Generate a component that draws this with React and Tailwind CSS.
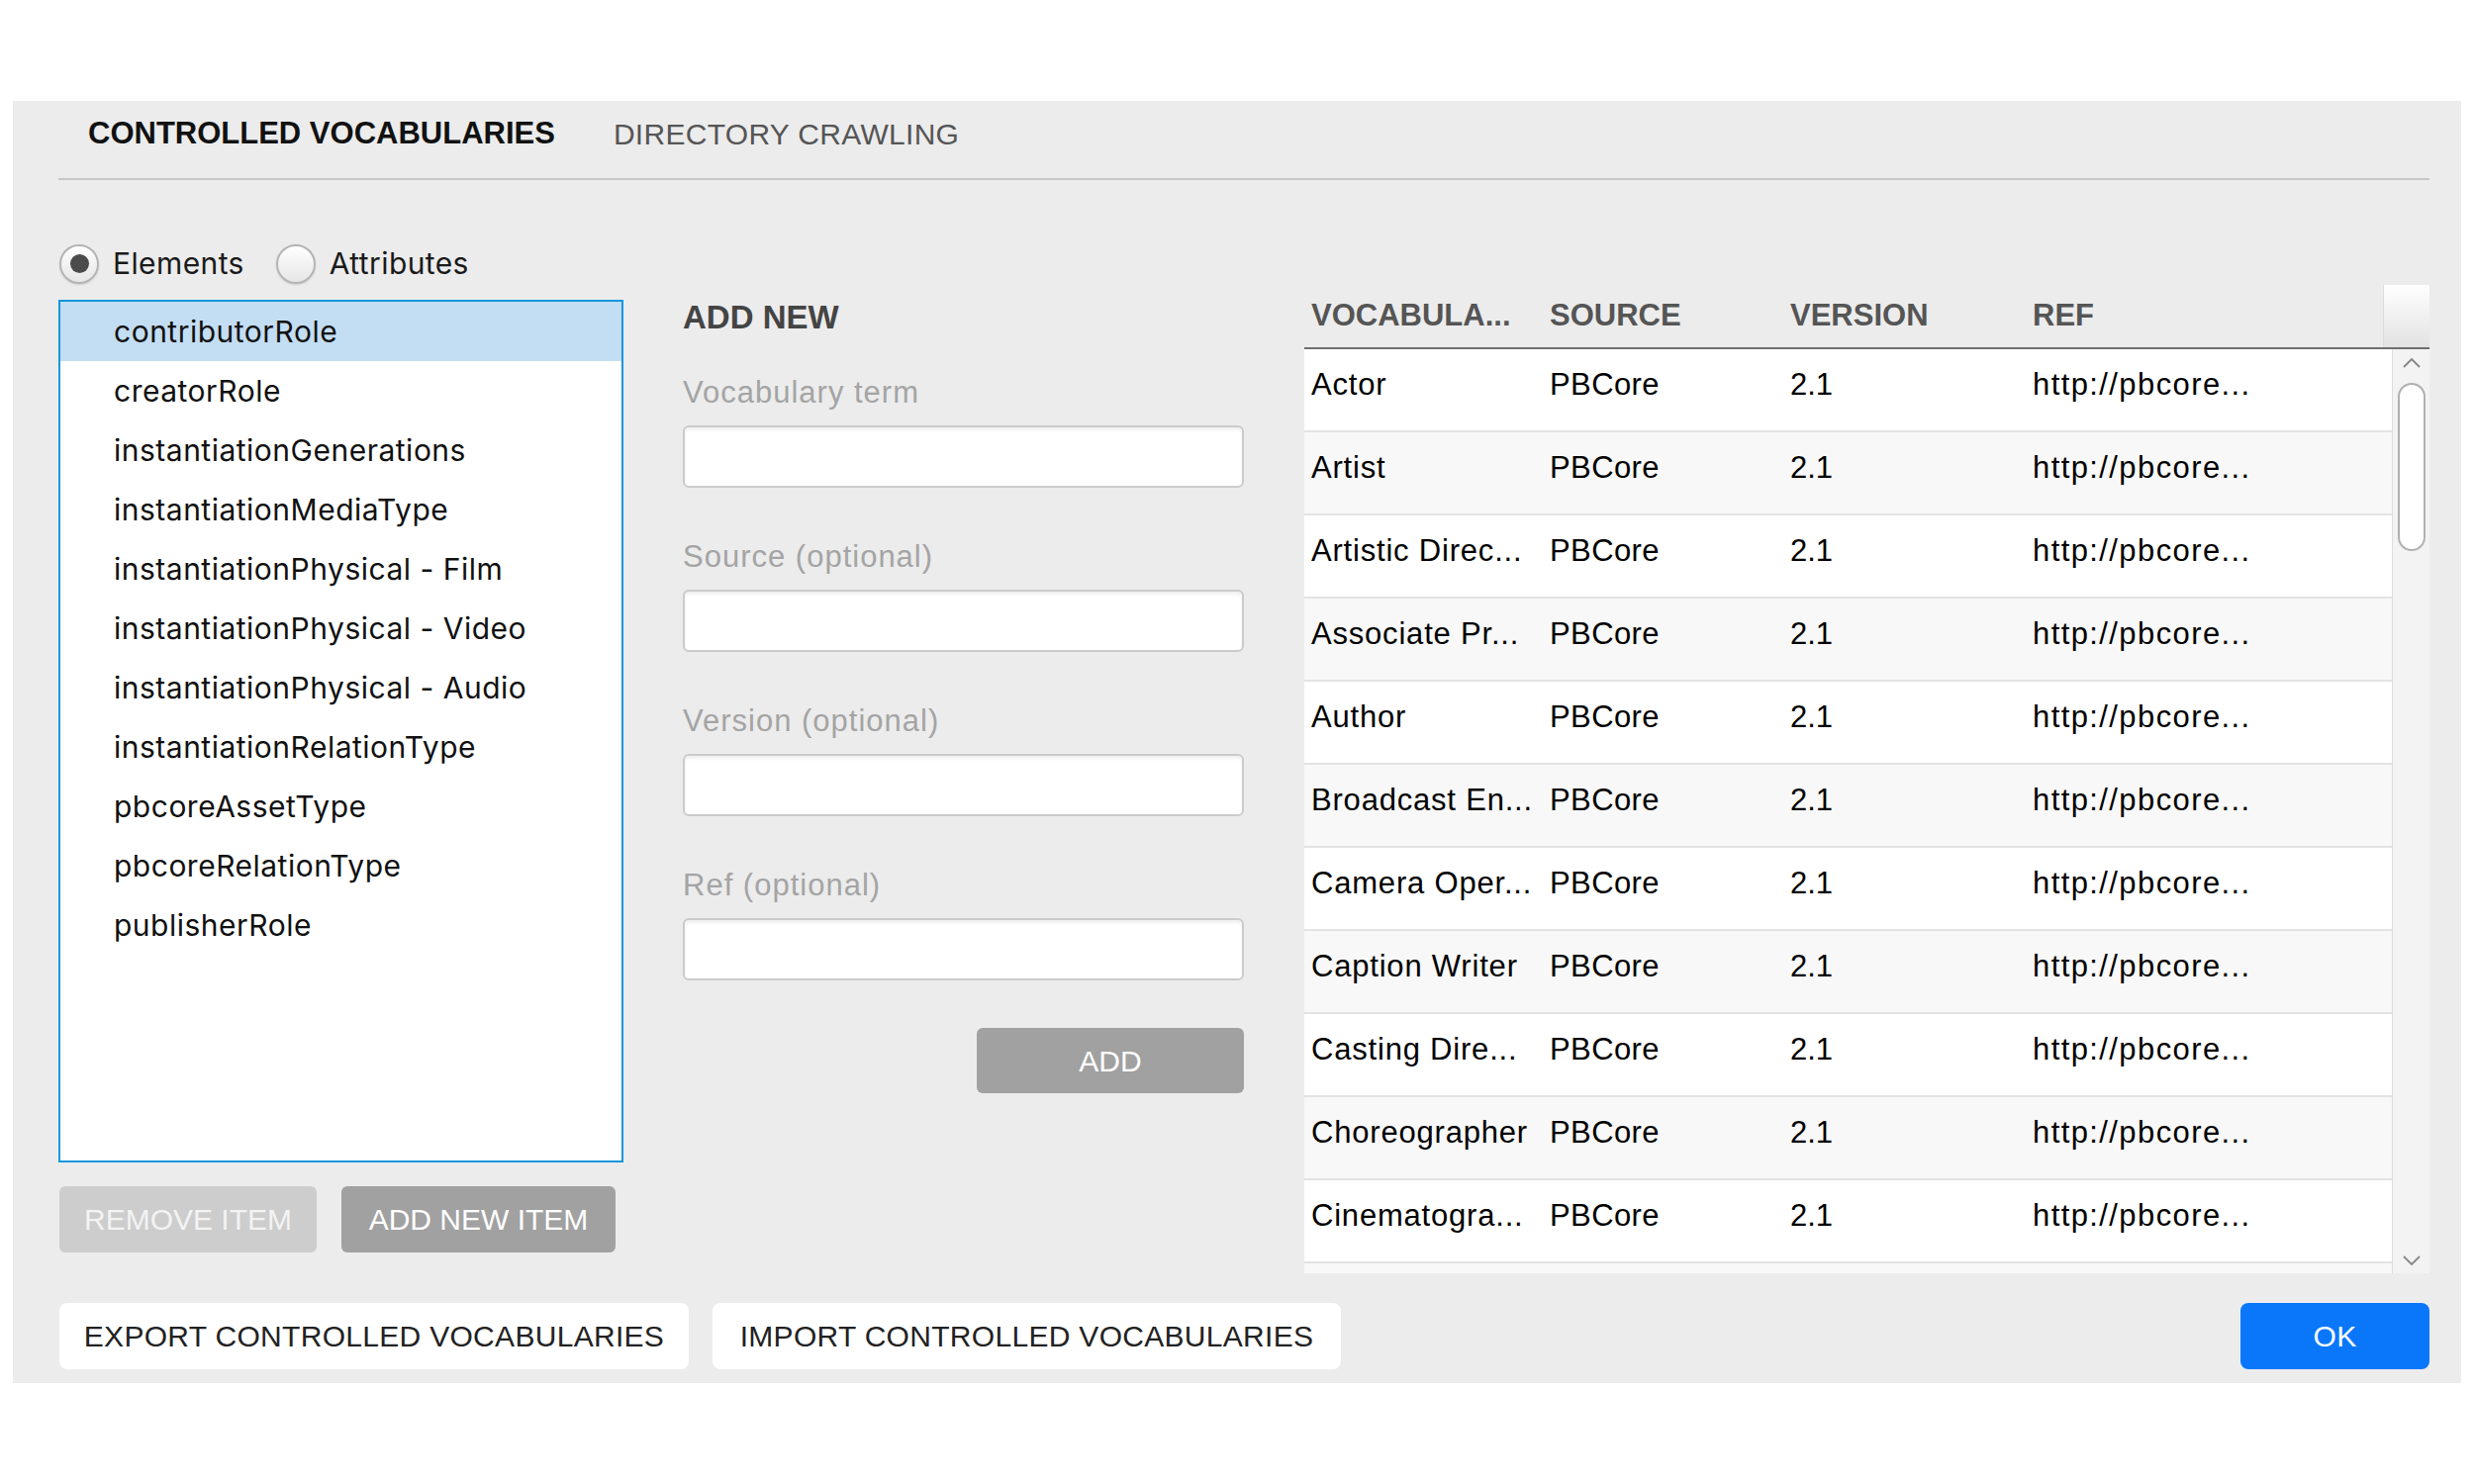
import React from 'react'

const items = [
  'contributorRole',
  'creatorRole',
  'instantiationGenerations',
  'instantiationMediaType',
  'instantiationPhysical - Film',
  'instantiationPhysical - Video',
  'instantiationPhysical - Audio',
  'instantiationRelationType',
  'pbcoreAssetType',
  'pbcoreRelationType',
  'publisherRole',
]

const terms = [
  'Actor',
  'Artist',
  'Artistic Direc...',
  'Associate Pr...',
  'Author',
  'Broadcast En...',
  'Camera Oper...',
  'Caption Writer',
  'Casting Dire...',
  'Choreographer',
  'Cinematogra...',
  '',
]

const fields = ['Vocabulary term', 'Source (optional)', 'Version (optional)', 'Ref (optional)']

function Radio({ checked, label }) {
  return (
    <div className="flex items-center gap-[14px]">
      <div className="flex h-[40px] w-[40px] items-center justify-center rounded-full border-2 border-[#b4b4b4] bg-gradient-to-b from-white to-[#e6e6e6] shadow-[0_1px_2px_rgba(0,0,0,0.12)]">
        {checked && <div className="h-[19px] w-[19px] rounded-full bg-[#4b4b4b]" />}
      </div>
      <span className="font-['Inter',sans-serif] text-[30px] tracking-[0.4px] text-[#1a1a1a]">{label}</span>
    </div>
  )
}

function Chevron({ up }) {
  return (
    <svg width="20" height="12" viewBox="0 0 20 12">
      <polyline
        points={up ? '2,10 10,2 18,10' : '2,2 10,10 18,2'}
        fill="none"
        stroke="#858585"
        strokeWidth="1.8"
      />
    </svg>
  )
}

export default function App() {
  return (
    <div className="h-[1500px] w-[2500px] bg-white pl-[13px] pt-[102px]">
      <div className="flex h-[1296px] w-[2474px] flex-col bg-[#ececec] pl-[46px] pr-[32px] font-['Liberation_Sans',sans-serif]">
        {/* tabs */}
        <div className="flex h-[80px] items-start border-b-2 border-[#c6c6c6] pl-[30px] pt-[16px]">
          <div className="flex h-[34px] items-center text-[31px] font-bold text-[#111]">CONTROLLED VOCABULARIES</div>
          <div className="ml-[59px] flex h-[34px] items-center text-[30px] tracking-[0.3px] text-[#555]">DIRECTORY CRAWLING</div>
        </div>

        <div className="flex h-[1105px] items-start">
          {/* elements list */}
          <div className="flex w-[571px] flex-col pt-[64px]">
            <div className="flex h-[41px] items-center gap-[32px] pl-[1px]">
              <Radio checked label="Elements" />
              <Radio label="Attributes" />
            </div>
            <div className="mt-[16px] h-[872px] border-2 border-[#1597dd] bg-white">
              {items.map((item, i) => (
                <div
                  key={item}
                  className={`flex h-[60px] items-center pl-[54px] font-['Inter',sans-serif] text-[30px] tracking-[0.5px] text-[#111] ${i === 0 ? 'bg-[#c3ddf3]' : ''}`}
                >
                  {item}
                </div>
              ))}
            </div>
            <div className="mt-[24px] flex gap-[25px] pl-[1px] text-[30px]">
              <button className="flex h-[67px] w-[260px] items-center justify-center rounded-[6px] bg-[#cdcdcd] text-[#f3f3f3]">REMOVE ITEM</button>
              <button className="flex h-[67px] w-[277px] items-center justify-center rounded-[6px] bg-[#a1a1a1] text-white">ADD NEW ITEM</button>
            </div>
          </div>

          {/* add new form */}
          <div className="ml-[60px] flex w-[567px] flex-col pt-[119px]">
            <div className="flex h-[40px] items-center text-[33px] font-bold text-[#444]">ADD NEW</div>
            {fields.map((f, i) => (
              <div key={f} className={i === 0 ? 'mt-[36px]' : 'mt-[50px]'}>
                <div className="flex h-[40px] items-center text-[31px] tracking-[1px] text-[#a4a4a4]">{f}</div>
                <div className="mt-[13px] h-[63px] rounded-[6px] border-2 border-[#cbcbcb] bg-white shadow-[inset_0_3px_3px_rgba(0,0,0,0.06)]" />
              </div>
            ))}
            <button className="mt-[48px] flex h-[66px] w-[270px] items-center justify-center self-end rounded-[6px] bg-[#a1a1a1] text-[30px] text-white">ADD</button>
          </div>

          {/* table */}
          <div className="ml-[61px] flex w-[1137px] flex-col pt-[106px]">
            <div className="flex h-[65px] border-b-2 border-[#6f6f6f]">
              <div className="grid w-[1090px] grid-cols-[241px_243px_245px_1fr] items-center text-[31px] font-bold text-[#555]">
                <div className="pl-[7px]">VOCABULA...</div>
                <div className="pl-[7px]">SOURCE</div>
                <div className="pl-[7px]">VERSION</div>
                <div className="pl-[7px]">REF</div>
              </div>
              <div className="w-[47px] border-l border-[#dcdcdc] bg-gradient-to-b from-white to-[#e2e2e2]" />
            </div>
            <div className="flex h-[934px]">
              <div className="w-[1099px] overflow-hidden">
                {terms.map((t, i) => (
                  <div
                    key={i}
                    className={`grid h-[84px] grid-cols-[241px_243px_245px_1fr] items-center border-b-2 border-[#e3e3e3] pb-[10px] text-[31px] text-black ${i % 2 === 0 ? 'bg-white' : 'bg-[#f8f8f8]'}`}
                  >
                    {t && (
                      <>
                        <div className="overflow-hidden whitespace-nowrap pl-[7px] tracking-[0.8px]">{t}</div>
                        <div className="pl-[7px] tracking-[0.4px]">PBCore</div>
                        <div className="pl-[7px]">2.1</div>
                        <div className="pl-[7px] tracking-[1.4px]">http://pbcore...</div>
                      </>
                    )}
                  </div>
                ))}
              </div>
              <div className="flex w-[38px] flex-col items-center border-l border-[#dedede] bg-[#f3f3f3] pb-[7px] pt-[8px]">
                <Chevron up />
                <div className="mt-[14px] h-[170px] w-[28px] rounded-[14px] border-2 border-[#b0b0b0] bg-white" />
                <div className="flex-1" />
                <Chevron />
              </div>
            </div>
          </div>
        </div>

        {/* footer */}
        <div className="mt-[30px] flex h-[67px] items-center text-[30px] tracking-[0.3px] text-[#222]">
          <button className="ml-[1px] flex h-[67px] w-[636px] items-center justify-center rounded-[8px] bg-white">EXPORT CONTROLLED VOCABULARIES</button>
          <button className="ml-[24px] flex h-[67px] w-[635px] items-center justify-center rounded-[8px] bg-white">IMPORT CONTROLLED VOCABULARIES</button>
          <div className="flex-1" />
          <button className="flex h-[67px] w-[191px] items-center justify-center rounded-[8px] bg-[#0a77fb] text-white">OK</button>
        </div>
      </div>
    </div>
  )
}
